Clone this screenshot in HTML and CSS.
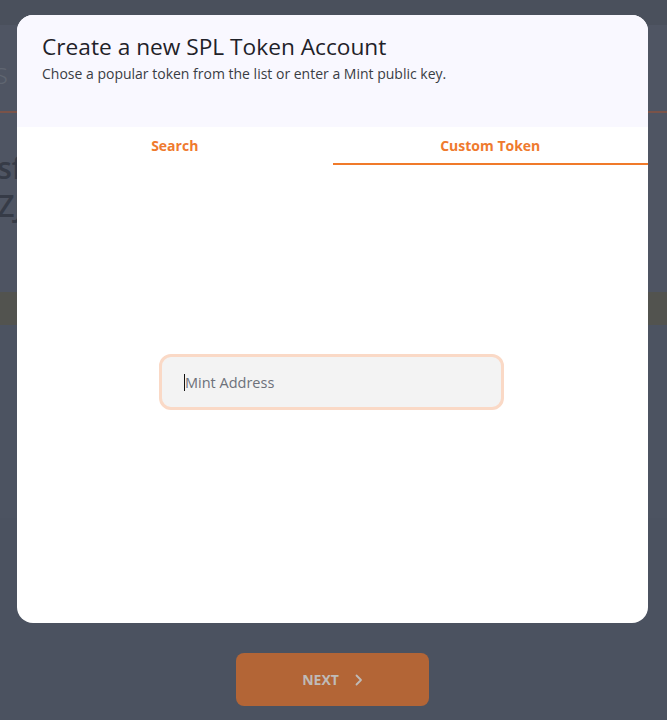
FILE: index.html
```html
<!DOCTYPE html>
<html>
<head>
<meta charset="utf-8">
<link rel="stylesheet" href="styles.css">
</head>
<body>
<div class="page">
  <div class="topbar"></div>
  <div class="hero">
    <div class="hero-title">Tokens</div>
    <div class="hero-line"></div>
    <div class="addr addr-first">8sf</div>
    <div class="addr">4ZJ</div>
  </div>
  <div class="band"></div>
  <div class="notice">No token account</div>
  <div class="rest"></div>
</div>

<div class="overlay">
  <div class="modal">
    <div class="modal-head">
      <h1 class="title">Create a new SPL Token Account</h1>
      <p class="subtitle">Chose a popular token from the list or enter a Mint public key.</p>
    </div>
    <div class="tabs">
      <div class="tab">Search</div>
      <div class="tab active">Custom Token</div>
    </div>
    <div class="modal-body">
      <div class="input-wrap">
        <span class="caret"></span><span class="placeholder">Mint Address</span>
      </div>
    </div>
  </div>
  <button class="next-btn">NEXT
    <svg class="chev" width="8" height="12" viewBox="0 0 8 12"><path d="M1.5 1.5 L6 6 L1.5 10.5" fill="none" stroke="currentColor" stroke-width="1.8" stroke-linecap="round" stroke-linejoin="round"/></svg>
  </button>
</div>
</body>
</html>
```
FILE: styles.css
```css
html, body {
  margin: 0;
  padding: 0;
}
body {
  width: 667px;
  height: 720px;
  overflow: hidden;
  background: #4c5361;
  font-family: "Open Sans", "Noto Sans", sans-serif;
  position: relative;
}
.page {
  display: flex;
  flex-direction: column;
}
.topbar {
  height: 25px;
  background: #4a505c;
}
.hero {
  height: 235px;
  background: #4f5563;
  padding-top: 30px;
  box-sizing: border-box;
  overflow: hidden;
}
.hero-title {
  font-size: 30px;
  line-height: 36px;
  color: #5f6571;
  margin-left: -88px;
  font-weight: 300;
}
.hero-line {
  height: 2px;
  background: #7a5349;
  margin-top: 20px;
}
.addr {
  font-size: 30px;
  line-height: 38px;
  color: #363b47;
  margin-left: -20px;
  font-weight: 600;
}
.addr-first {
  margin-top: 36px;
}
.band {
  height: 32px;
  background: #4e5462;
}
.notice {
  height: 33px;
  background: #52534f;
  color: #3c3d3b;
  font-size: 11px;
  line-height: 33px;
  margin-left: -96px;
}
.rest {
  height: 395px;
  background: linear-gradient(#4c5361 0, #4c5361 193px, #4b5260 193px);
}

.overlay {
  position: absolute;
  inset: 0;
  display: flex;
  flex-direction: column;
  align-items: flex-start;
  padding: 15px 0 0 17px;
  box-sizing: border-box;
}
.modal {
  width: 631px;
  height: 608px;
  background: #ffffff;
  border-radius: 16px;
  overflow: hidden;
  display: flex;
  flex-direction: column;
}
.modal-head {
  height: 112px;
  background: #f9f8ff;
  padding: 16px 25px 0;
  box-sizing: border-box;
}
.title {
  margin: 0;
  font-size: 22.7px;
  line-height: 31px;
  font-weight: 400;
  color: #1f2229;
}
.subtitle {
  margin: 2px 0 0;
  font-size: 14px;
  line-height: 19px;
  color: #3a3d44;
}
.tabs {
  display: flex;
}
.tab {
  flex: 1;
  height: 38px;
  display: flex;
  align-items: center;
  justify-content: center;
  font-size: 14px;
  font-weight: 700;
  color: #ef7a2e;
  box-sizing: border-box;
  border-bottom: 2px solid transparent;
  padding-top: 1px;
}
.tab.active {
  border-bottom-color: #f07a2a;
}
.modal-body {
  flex: 1;
  display: flex;
  justify-content: center;
  padding-top: 189px;
  padding-right: 2px;
}
.input-wrap {
  width: 345px;
  height: 56px;
  box-sizing: border-box;
  border: 3px solid #fad9c6;
  border-radius: 12px;
  background: #f3f3f3;
  display: flex;
  align-items: center;
  padding-left: 22px;
}
.caret {
  width: 1px;
  height: 17px;
  background: #111;
}
.placeholder {
  font-size: 14.5px;
  color: #6d717a;
}
.next-btn {
  margin-top: 30px;
  margin-left: 219px;
  width: 193px;
  height: 53px;
  border: none;
  border-radius: 8px;
  background: #b36536;
  color: #bfbbb8;
  font-family: "Open Sans", "Noto Sans", sans-serif;
  font-size: 14px;
  font-weight: 700;
  display: flex;
  align-items: center;
  justify-content: center;
  gap: 16px;
  padding: 0;
}
.chev {
  display: block;
}
```
